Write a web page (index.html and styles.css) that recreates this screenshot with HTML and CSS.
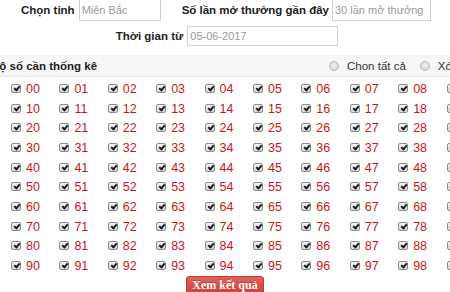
FILE: index.html
```html
<!DOCTYPE html>
<html lang="vi">
<head>
<meta charset="utf-8">
<title>Thống kê</title>
<link rel="stylesheet" href="styles.css">
</head>
<body>
<div class="page">
  <div class="form-row row1">
    <label class="lbl">Chọn tỉnh</label>
    <span class="inp inp-prov">Miên Bắc</span>
    <label class="lbl lbl2">Số lần mở thưởng gần đây</label>
    <span class="inp inp-count">30 lần mở thưởng</span>
  </div>
  <div class="form-row row2">
    <label class="lbl">Thời gian từ</label>
    <span class="inp inp-date">05-06-2017</span>
  </div>
  <div class="band">
    <span class="band-title">Bộ số cần thống kê</span>
    <span class="radios">
      <span class="rd"><i class="radio"></i>Chon tất cả</span>
      <span class="rd"><i class="radio"></i>Xóa tất cả</span>
    </span>
  </div>
  <div class="grid">
    <span class="it"><i class="cb"></i><b>00</b></span><span class="it"><i class="cb"></i><b>01</b></span><span class="it"><i class="cb"></i><b>02</b></span><span class="it"><i class="cb"></i><b>03</b></span><span class="it"><i class="cb"></i><b>04</b></span><span class="it"><i class="cb"></i><b>05</b></span><span class="it"><i class="cb"></i><b>06</b></span><span class="it"><i class="cb"></i><b>07</b></span><span class="it"><i class="cb"></i><b>08</b></span><span class="it"><i class="cb"></i><b>09</b></span>
    <span class="it"><i class="cb"></i><b>10</b></span><span class="it"><i class="cb"></i><b>11</b></span><span class="it"><i class="cb"></i><b>12</b></span><span class="it"><i class="cb"></i><b>13</b></span><span class="it"><i class="cb"></i><b>14</b></span><span class="it"><i class="cb"></i><b>15</b></span><span class="it"><i class="cb"></i><b>16</b></span><span class="it"><i class="cb"></i><b>17</b></span><span class="it"><i class="cb"></i><b>18</b></span><span class="it"><i class="cb"></i><b>19</b></span>
    <span class="it"><i class="cb"></i><b>20</b></span><span class="it"><i class="cb"></i><b>21</b></span><span class="it"><i class="cb"></i><b>22</b></span><span class="it"><i class="cb"></i><b>23</b></span><span class="it"><i class="cb"></i><b>24</b></span><span class="it"><i class="cb"></i><b>25</b></span><span class="it"><i class="cb"></i><b>26</b></span><span class="it"><i class="cb"></i><b>27</b></span><span class="it"><i class="cb"></i><b>28</b></span><span class="it"><i class="cb"></i><b>29</b></span>
    <span class="it"><i class="cb"></i><b>30</b></span><span class="it"><i class="cb"></i><b>31</b></span><span class="it"><i class="cb"></i><b>32</b></span><span class="it"><i class="cb"></i><b>33</b></span><span class="it"><i class="cb"></i><b>34</b></span><span class="it"><i class="cb"></i><b>35</b></span><span class="it"><i class="cb"></i><b>36</b></span><span class="it"><i class="cb"></i><b>37</b></span><span class="it"><i class="cb"></i><b>38</b></span><span class="it"><i class="cb"></i><b>39</b></span>
    <span class="it"><i class="cb"></i><b>40</b></span><span class="it"><i class="cb"></i><b>41</b></span><span class="it"><i class="cb"></i><b>42</b></span><span class="it"><i class="cb"></i><b>43</b></span><span class="it"><i class="cb"></i><b>44</b></span><span class="it"><i class="cb"></i><b>45</b></span><span class="it"><i class="cb"></i><b>46</b></span><span class="it"><i class="cb"></i><b>47</b></span><span class="it"><i class="cb"></i><b>48</b></span><span class="it"><i class="cb"></i><b>49</b></span>
    <span class="it"><i class="cb"></i><b>50</b></span><span class="it"><i class="cb"></i><b>51</b></span><span class="it"><i class="cb"></i><b>52</b></span><span class="it"><i class="cb"></i><b>53</b></span><span class="it"><i class="cb"></i><b>54</b></span><span class="it"><i class="cb"></i><b>55</b></span><span class="it"><i class="cb"></i><b>56</b></span><span class="it"><i class="cb"></i><b>57</b></span><span class="it"><i class="cb"></i><b>58</b></span><span class="it"><i class="cb"></i><b>59</b></span>
    <span class="it"><i class="cb"></i><b>60</b></span><span class="it"><i class="cb"></i><b>61</b></span><span class="it"><i class="cb"></i><b>62</b></span><span class="it"><i class="cb"></i><b>63</b></span><span class="it"><i class="cb"></i><b>64</b></span><span class="it"><i class="cb"></i><b>65</b></span><span class="it"><i class="cb"></i><b>66</b></span><span class="it"><i class="cb"></i><b>67</b></span><span class="it"><i class="cb"></i><b>68</b></span><span class="it"><i class="cb"></i><b>69</b></span>
    <span class="it"><i class="cb"></i><b>70</b></span><span class="it"><i class="cb"></i><b>71</b></span><span class="it"><i class="cb"></i><b>72</b></span><span class="it"><i class="cb"></i><b>73</b></span><span class="it"><i class="cb"></i><b>74</b></span><span class="it"><i class="cb"></i><b>75</b></span><span class="it"><i class="cb"></i><b>76</b></span><span class="it"><i class="cb"></i><b>77</b></span><span class="it"><i class="cb"></i><b>78</b></span><span class="it"><i class="cb"></i><b>79</b></span>
    <span class="it"><i class="cb"></i><b>80</b></span><span class="it"><i class="cb"></i><b>81</b></span><span class="it"><i class="cb"></i><b>82</b></span><span class="it"><i class="cb"></i><b>83</b></span><span class="it"><i class="cb"></i><b>84</b></span><span class="it"><i class="cb"></i><b>85</b></span><span class="it"><i class="cb"></i><b>86</b></span><span class="it"><i class="cb"></i><b>87</b></span><span class="it"><i class="cb"></i><b>88</b></span><span class="it"><i class="cb"></i><b>89</b></span>
    <span class="it"><i class="cb"></i><b>90</b></span><span class="it"><i class="cb"></i><b>91</b></span><span class="it"><i class="cb"></i><b>92</b></span><span class="it"><i class="cb"></i><b>93</b></span><span class="it"><i class="cb"></i><b>94</b></span><span class="it"><i class="cb"></i><b>95</b></span><span class="it"><i class="cb"></i><b>96</b></span><span class="it"><i class="cb"></i><b>97</b></span><span class="it"><i class="cb"></i><b>98</b></span><span class="it"><i class="cb"></i><b>99</b></span>
  </div>
  <div class="actions">
    <button class="btn">Xem kết quả</button>
  </div>
</div>
</body>
</html>
```

FILE: styles.css
```css
html, body {
  margin: 0;
  padding: 0;
  overflow: hidden;
  background: #fff;
}
body {
  width: 450px;
  height: 292px;
  font-family: "Liberation Sans", Arial, sans-serif;
  color: #333;
}
.page {
  width: 450px;
}
.form-row {
  display: flex;
  align-items: center;
  justify-content: center;
  white-space: nowrap;
}
.row1 {
  height: 22px;
  margin-top: -1px;
  padding-left: 2px;
}
.row2 {
  height: 20px;
  margin-top: 5px;
  padding-left: 4px;
}
.lbl {
  font-weight: bold;
  font-size: 11.5px;
  color: #222;
  margin-right: 4px;
}
.lbl2 {
  margin-left: 21px;
  margin-right: 3px;
}
.inp {
  box-sizing: border-box;
  display: flex;
  align-items: center;
  height: 100%;
  border: 1px solid #cfcfcf;
  padding-left: 2px;
  font-size: 11px;
  color: #9a9a9a;
  background: #fff;
  overflow: hidden;
}
.inp-prov { width: 82px; }
.inp-count { width: 99px; }
.inp-date { width: 151px; }
.band {
  display: grid;
  grid-template-columns: 338px auto;
  align-items: center;
  height: 21px;
  margin-top: 9px;
  margin-left: -9px;
  width: 520px;
  background: #f6f6f6;
  border-bottom: 1px solid #ececec;
  white-space: nowrap;
}
.band-title {
  font-weight: bold;
  font-size: 11.5px;
  color: #222;
}
.radios {
  display: flex;
  align-items: center;
  font-size: 11.5px;
  color: #333;
}
.rd {
  display: flex;
  align-items: center;
  margin-right: 14px;
}
.radio {
  box-sizing: border-box;
  width: 10px;
  height: 10px;
  border-radius: 50%;
  border: 1px solid #b9b9b9;
  background: radial-gradient(circle at 50% 40%, #f2f2f2, #cfcfcf);
  margin-right: 8px;
}
.grid {
  display: grid;
  grid-template-columns: repeat(10, 48.4px);
  grid-auto-rows: 19.7px;
  padding-left: 11px;
  margin-top: 2px;
}
.it {
  display: flex;
  align-items: center;
  white-space: nowrap;
}
.cb {
  position: relative;
  box-sizing: border-box;
  width: 10px;
  height: 9px;
  border: 1px solid #8c8c8c;
  border-radius: 2px;
  background: linear-gradient(#f4f4f4, #d6d6d6);
  margin-right: 5px;
  margin-top: -1px;
}
.cb::after {
  content: "";
  position: absolute;
  left: 3px;
  top: 0;
  width: 2px;
  height: 4px;
  border: solid #1e1e1e;
  border-width: 0 2px 2px 0;
  transform: rotate(40deg);
}
.it b {
  font-weight: normal;
  font-size: 12.5px;
  color: #c8161d;
}
.actions {
  display: flex;
  justify-content: center;
}
.btn {
  width: 78px;
  height: 20px;
  padding: 0;
  border: 1px solid #c23a35;
  border-radius: 3px;
  background: linear-gradient(#e2625d, #cc3a35);
  color: #fff;
  font-family: "Liberation Serif", "Times New Roman", serif;
  font-weight: bold;
  font-size: 12px;
  text-shadow: 0 -1px 0 rgba(0,0,0,0.2);
}
```
